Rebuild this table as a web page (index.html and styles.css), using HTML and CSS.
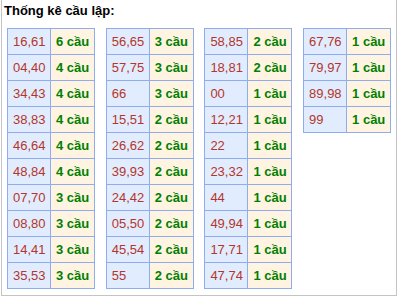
FILE: index.html
```html
<!DOCTYPE html>
<html>
<head>
<meta charset="utf-8">
<link rel="stylesheet" href="styles.css">
</head>
<body>
<div class="box">
  <div class="title">Thống kê cầu lập:</div>
  <div class="tables">
    <table class="tk">
      <tr><td class="n">16,61</td><td class="c">6 cầu</td></tr>
      <tr><td class="n">04,40</td><td class="c">4 cầu</td></tr>
      <tr><td class="n">34,43</td><td class="c">4 cầu</td></tr>
      <tr><td class="n">38,83</td><td class="c">4 cầu</td></tr>
      <tr><td class="n">46,64</td><td class="c">4 cầu</td></tr>
      <tr><td class="n">48,84</td><td class="c">4 cầu</td></tr>
      <tr><td class="n">07,70</td><td class="c">3 cầu</td></tr>
      <tr><td class="n">08,80</td><td class="c">3 cầu</td></tr>
      <tr><td class="n">14,41</td><td class="c">3 cầu</td></tr>
      <tr><td class="n">35,53</td><td class="c">3 cầu</td></tr>
    </table>
    <table class="tk">
      <tr><td class="n">56,65</td><td class="c">3 cầu</td></tr>
      <tr><td class="n">57,75</td><td class="c">3 cầu</td></tr>
      <tr><td class="n">66</td><td class="c">3 cầu</td></tr>
      <tr><td class="n">15,51</td><td class="c">2 cầu</td></tr>
      <tr><td class="n">26,62</td><td class="c">2 cầu</td></tr>
      <tr><td class="n">39,93</td><td class="c">2 cầu</td></tr>
      <tr><td class="n">24,42</td><td class="c">2 cầu</td></tr>
      <tr><td class="n">05,50</td><td class="c">2 cầu</td></tr>
      <tr><td class="n">45,54</td><td class="c">2 cầu</td></tr>
      <tr><td class="n">55</td><td class="c">2 cầu</td></tr>
    </table>
    <table class="tk">
      <tr><td class="n">58,85</td><td class="c">2 cầu</td></tr>
      <tr><td class="n">18,81</td><td class="c">2 cầu</td></tr>
      <tr><td class="n">00</td><td class="c">1 cầu</td></tr>
      <tr><td class="n">12,21</td><td class="c">1 cầu</td></tr>
      <tr><td class="n">22</td><td class="c">1 cầu</td></tr>
      <tr><td class="n">23,32</td><td class="c">1 cầu</td></tr>
      <tr><td class="n">44</td><td class="c">1 cầu</td></tr>
      <tr><td class="n">49,94</td><td class="c">1 cầu</td></tr>
      <tr><td class="n">17,71</td><td class="c">1 cầu</td></tr>
      <tr><td class="n">47,74</td><td class="c">1 cầu</td></tr>
    </table>
    <table class="tk">
      <tr><td class="n">67,76</td><td class="c">1 cầu</td></tr>
      <tr><td class="n">79,97</td><td class="c">1 cầu</td></tr>
      <tr><td class="n">89,98</td><td class="c">1 cầu</td></tr>
      <tr><td class="n">99</td><td class="c">1 cầu</td></tr>
    </table>
  </div>
</div>
</body>
</html>
```
FILE: styles.css
```css
html, body {
  margin: 0;
  padding: 0;
  background: #fff;
}
body {
  font-family: "Liberation Sans", Arial, sans-serif;
  font-size: 13px;
}
.box {
  margin-left: 1px;
  width: 396px;
  height: 296px;
  box-sizing: border-box;
  border: 1px solid #c4c4c4;
  border-top: none;
}
.title {
  font-weight: bold;
  font-size: 13px;
  color: #000;
  padding: 3px 0 0 2px;
  height: 28px;
  box-sizing: border-box;
  line-height: 16px;
}
.tables {
  display: flex;
  align-items: flex-start;
  gap: 10.7px;
  padding-left: 5px;
}
.tk {
  border-collapse: collapse;
  width: 87px;
  table-layout: fixed;
}
.tk td {
  box-sizing: border-box;
  border: 1px solid #8fadee;
  height: 26px;
  padding: 0 0 0 5px;
  white-space: nowrap;
  vertical-align: middle;
  overflow: hidden;
}
.tk td.n {
  width: 43px;
  background: #e1edff;
  color: #b5352a;
}
.tk td.c {
  width: 44px;
  background: #fff4e2;
  color: #008000;
  font-weight: bold;
}
```
